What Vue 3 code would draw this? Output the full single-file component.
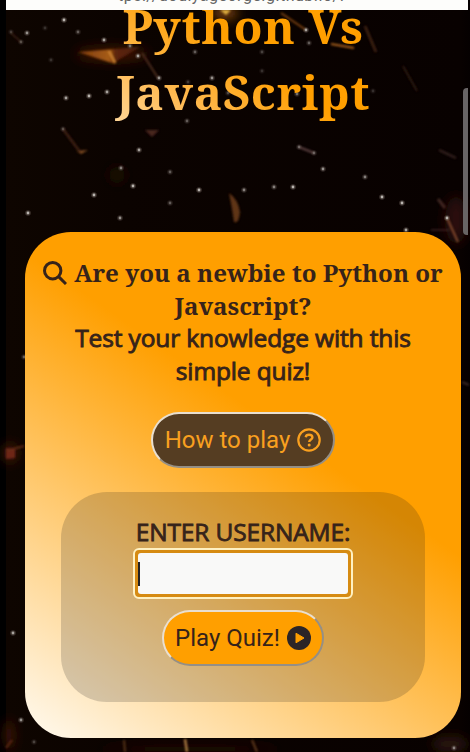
<script setup>
const stars = [
  [64, 20, 1], [27, 33, 0.8], [78, 32, 0.5], [104, 40, 0.9], [11, 32, 0.3], [21, 42, 0.4], [45, 28, 0.25], [51, 60, 0.25],
  [138, 56, 0.9], [159, 78, 0.8], [130, 46, 0.6], [107, 92, 0.9], [89, 96, 1], [66, 98, 0.9], [195, 52, 0.5], [212, 78, 0.8],
  [187, 121, 0.5], [306, 30, 0.9], [309, 43, 0.5], [262, 52, 0.35], [262, 71, 0.25], [297, 94, 0.6], [373, 91, 0.25],
  [63, 129, 0.4], [139, 150, 0.9], [121, 168, 0.7], [170, 172, 0.5], [133, 186, 1], [94, 195, 1], [199, 190, 1],
  [170, 203, 0.5], [28, 213, 1], [120, 218, 0.8], [244, 190, 0.7], [274, 187, 0.7], [293, 187, 1], [323, 169, 0.8],
  [365, 177, 0.7], [382, 197, 1], [402, 203, 1], [447, 218, 1], [406, 230, 0.9], [228, 93, 0.4], [188, 82, 0.3],
  [13, 633, 0.9], [21, 720, 0.8], [34, 742, 0.35], [454, 748, 0.7], [24, 357, 0.5], [299, 147, 0.5], [314, 153, 0.5]
]
const streaks = [
  [142, 53, 158, 78, 2, '#68402c', 0.7], [281, 13, 306, 30, 2, '#965014', 0.8], [331, 44, 354, 48, 2, '#b86a20', 0.9],
  [365, 26, 376, 52, 2.5, '#4f2d1b', 0.8], [403, 66, 417, 91, 2, '#352015', 0.8], [63, 129, 80, 152, 2.5, '#4e281b', 0.8],
  [299, 147, 314, 153, 2, '#725050', 0.8], [439, 150, 456, 158, 2, '#4a322d', 0.7], [438, 199, 445, 208, 3, '#664038', 0.6],
  [447, 218, 458, 242, 2, '#9a5834', 0.8], [431, 230, 449, 230, 2, '#493024', 0.6], [11, 33, 21, 42, 1.5, '#4d2a1c', 0.8],
  [6, 451, 24, 446, 2, '#6b3018', 0.8], [124, 740, 125, 752, 2, '#67401f', 0.8], [185, 739, 187, 752, 2.5, '#b78445', 0.9],
  [252, 740, 257, 752, 2, '#72481f', 0.8], [6, 748, 12, 740, 2, '#7a3420', 0.7], [462, 382, 469, 385, 2, '#493330', 0.8]
]
</script>

<template>
  <div class="screen">
    <svg class="backdrop" viewBox="0 0 470 752" aria-hidden="true">
      <defs>
        <filter id="soft" x="-10%" y="-10%" width="120%" height="120%"><feGaussianBlur stdDeviation="0.8" /></filter>
        <filter id="glow" x="-10%" y="-10%" width="120%" height="120%"><feGaussianBlur stdDeviation="6" /></filter>
        <linearGradient id="shard" x1="0" x2="1"><stop offset="0" stop-color="#7d3c0d" /><stop offset=".5" stop-color="#a65c16" /><stop offset=".6" stop-color="#5e2509" /><stop offset="1" stop-color="#4c2111" /></linearGradient>
      </defs>
      <g filter="url(#glow)">
        <ellipse cx="112" cy="54" rx="36" ry="7" fill="#3f1706" />
        <ellipse cx="456" cy="220" rx="11" ry="24" fill="#2c1107" />
        <ellipse cx="117" cy="175" rx="8" ry="9" fill="#1d0c06" />
        <ellipse cx="10" cy="453" rx="7" ry="9" fill="#4d1b09" />
        <ellipse cx="9" cy="735" rx="4" ry="15" fill="#4b170d" />
        <ellipse cx="450" cy="744" rx="18" ry="8" fill="#2a1308" />
        <ellipse cx="225" cy="13" rx="13" ry="6" fill="#8a4b0c" />
        <ellipse cx="190" cy="749" rx="90" ry="4" fill="#201004" />
      </g>
      <g filter="url(#soft)">
        <path d="M78 52 140 47 118 60 115 64Z" fill="url(#shard)" />
        <path d="M109 51 115 63" stroke="#d18632" stroke-width="2" />
        <path d="M229 193Q238 199 240 212Q239 224 234 222Q232 208 229 193Z" fill="#5f3415" />
        <path d="M145 130 159 130 152 137Z" fill="#4a251f" />
        <path d="M77 151 88 150 81 154Z" fill="#865022" />
        <path d="M6 448 15 449 15 458 6 459Z" fill="#6e2815" />
        <path d="M220 10 231 10 226 15Z" fill="#e0b040" />
        <line v-for="(s, i) in streaks" :key="i" :x1="s[0]" :y1="s[1]" :x2="s[2]" :y2="s[3]" :stroke-width="s[4]" :stroke="s[5]" :opacity="s[6]" />
      </g>
      <g v-for="(s, i) in stars" :key="'s' + i" :opacity="s[2]">
        <circle :cx="s[0]" :cy="s[1]" r="2.8" fill="#6b5f58" opacity=".5" />
        <circle :cx="s[0]" :cy="s[1]" r="1.4" fill="#b9b4af" />
      </g>
    </svg>

    <div class="address"><span>tps://dodiyageorge.github.io/P</span></div>
    <h1 class="title"><span>Python Vs</span><span>JavaScript</span></h1>

    <main class="card">
      <div class="intro">
        <p class="serif row">
          <svg class="search" viewBox="0 0 24 24"><circle cx="9.7" cy="9.7" r="8.2" /><path d="M15.6 15.6 23 23" /></svg>
          <span>Are you a newbie to Python or</span>
        </p>
        <p class="serif">Javascript?</p>
        <p class="sans">Test your knowledge with this</p>
        <p class="sans">simple quiz!</p>
      </div>

      <button class="btn how">
        <span>How to play</span>
        <svg viewBox="0 0 24 24"><circle cx="12" cy="12" r="10.7" fill="none" stroke="currentColor" stroke-width="2.2" /><path d="M8.7 9.2C9 7.4 10.1 6.8 12 6.8C14 6.8 15.4 7.8 15.4 9.4C15.4 11.4 12.2 11.5 12.2 14" fill="none" stroke="currentColor" stroke-width="2.4" /><circle cx="12.2" cy="17" r="1.5" fill="currentColor" /></svg>
      </button>

      <form class="panel" @submit.prevent>
        <label for="username">ENTER USERNAME:</label>
        <div class="field"><span class="caret"></span><input id="username" type="text" /></div>
        <button class="btn play" type="button">
          <span>Play Quiz!</span>
          <svg viewBox="0 0 24 24"><circle cx="12" cy="12" r="12" fill="#2c2527" /><path d="M9 7.2 17 12 9 16.8Z" fill="#ff9f00" stroke="#ff9f00" stroke-width="1" stroke-linejoin="round" /></svg>
        </button>
      </form>
    </main>
    <div class="scrollbar"></div>
  </div>
</template>

<style>
body { margin: 0; background: #000; }
</style>

<style scoped>
* { box-sizing: border-box; }
.screen { position: relative; width: 470px; height: 752px; overflow: hidden; background: linear-gradient(90deg, #000 6px, #0e0500 6px, #0b0300 120px, #080100 461px, #050000 470px); display: flex; flex-direction: column; }
.backdrop { position: absolute; inset: 0; width: 470px; height: 752px; }
.address { position: relative; height: 10px; margin: 0 2px 0 6px; background: #fdfdfb; overflow: hidden; flex: none; }
.address span { display: block; margin: -14px 0 0 112px; font: 16px/20px Roboto, sans-serif; letter-spacing: 0.5px; color: #666; white-space: nowrap; }
.title { position: relative; margin: -17px 9px 0 25px; height: 132px; flex: none; text-align: center; font-family: "Noto Serif", "DejaVu Serif Condensed", "DejaVu Serif", serif; font-stretch: condensed; font-weight: 700; font-size: 47.5px; letter-spacing: 0.55px; line-height: 66px; white-space: nowrap; color: transparent; background: linear-gradient(35deg, #fff2dc 0%, #ffb84c 32%, #ff9f00 52%); background-clip: text; -webkit-background-clip: text; clip-path: inset(17px 0 0 0); }
.title span { display: block; }
.card { position: relative; margin: 107px 9px 0 25px; height: 506px; border-radius: 46px; background: linear-gradient(35deg, #fffaf0 0%, #ff9f00 60%); display: flex; flex-direction: column; align-items: center; padding-top: 25px; color: #36231a; }
.intro { width: 100%; text-align: center; }
p { margin: 0; height: 32.7px; line-height: 32.7px; white-space: nowrap; }
.serif { font-family: "Noto Serif", "DejaVu Serif Condensed", "DejaVu Serif", serif; font-stretch: condensed; font-weight: 700; font-size: 24.15px; }
.row { display: flex; justify-content: center; gap: 7px; align-items: center; }
.search { width: 24px; height: 24px; fill: none; stroke: #36231a; stroke-width: 3; flex: none; }
.sans { font: 24.5px/32.7px "Open Sans", sans-serif; letter-spacing: -0.13px; -webkit-text-stroke: 0.9px #36231a; }
.btn { display: flex; align-items: center; justify-content: center; gap: 7px; height: 56px; border-radius: 28px; font: 24px/30px Roboto, sans-serif; padding: 0; white-space: nowrap; }
.btn svg { width: 24px; height: 24px; flex: none; }
.how { margin-top: 24px; width: 184px; background: #553d22; color: #f9a01f; border: 2px outset #e9dfd0; }
.panel { margin-top: 24px; width: 364px; height: 210px; border-radius: 46px; background: rgba(20, 20, 20, 0.18); display: flex; flex-direction: column; align-items: center; padding-top: 24px; }
label { font: 24.5px/32px "Open Sans", sans-serif; letter-spacing: -0.15px; -webkit-text-stroke: 0.8px #36231a; white-space: nowrap; }
.field { display: flex; align-items: center; width: 220px; height: 51px; border: 2px solid #fff1c2; border-radius: 6px; background: #d68b12; padding: 3px; position: relative; }
input { width: 100%; height: 100%; border: 0; border-radius: 3px; background: #f9f9f8; padding: 0; outline: 0; }
.caret { position: absolute; left: 3px; top: 12px; width: 2px; height: 24px; background: #222; }
.play { margin-top: 11px; width: 162px; background: #ff9f00; color: #36231a; border: 2px outset #e9dfd0; }
.scrollbar { position: absolute; right: 2px; top: 88px; width: 5px; height: 147px; border-radius: 4px 0 0 4px; background: #686465; }
</style>
